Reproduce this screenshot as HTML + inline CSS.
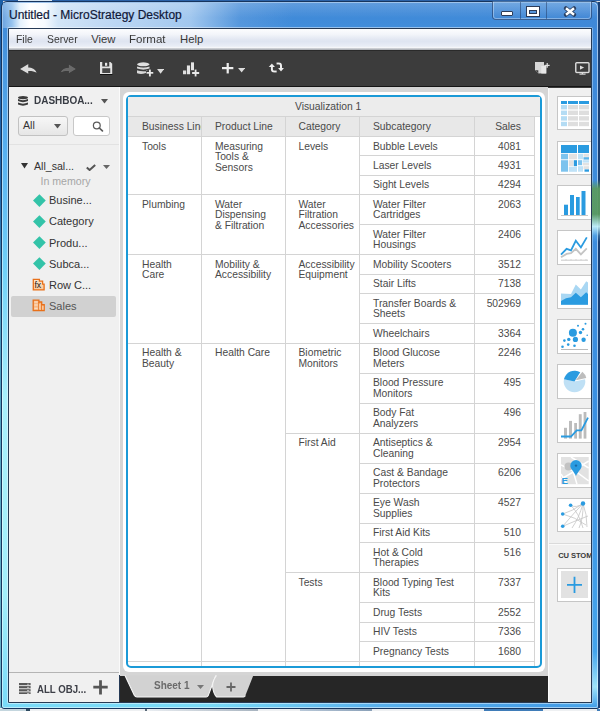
<!DOCTYPE html>
<html><head><meta charset="utf-8">
<style>
*{margin:0;padding:0;box-sizing:border-box}
html,body{width:600px;height:711px;overflow:hidden;background:#8fb8e0;font-family:"Liberation Sans",sans-serif}
.a{position:absolute}
#frame{left:0;top:0;width:600px;height:711px}
.t{position:absolute;white-space:nowrap;color:#4a4a4a;font-size:10.3px;line-height:10.5px}
.hl{position:absolute;height:1px;background:#d4d4d4}
.vl{position:absolute;width:1px;background:#d4d4d4}
.n{text-align:right}
.box{position:absolute;left:557px;width:40px;height:35px;background:#fff;border:1px solid #c9c9c9}
</style></head><body>
<!-- desktop / window frame -->
<div class="a" style="left:0;top:0;width:600px;height:711px;background:#d8dde4"></div>
<div class="a" style="left:0;top:0;width:600px;height:1px;background:#2b62a8"></div><div class="a" style="left:18px;top:0;width:34px;height:1px;background:#d8e6f2"></div>
<div class="a" style="left:0;top:0;width:3px;height:711px;background:linear-gradient(180deg,#1c5fa8 0,#1f66ad 25%,#4a9cc0 45%,#6ab4c8 100%)"></div>
<div class="a" style="left:0;top:708px;width:600px;height:3px;background:#eef0f2"></div>
<div class="a" style="left:0;top:709px;width:26px;height:2px;background:#c4d6de"></div>
<div class="a" style="left:26px;top:709px;width:4px;height:2px;background:#2e4a60"></div>
<div class="a" style="left:145px;top:709px;width:2px;height:2px;background:#5a6a78"></div>
<div class="a" style="left:150px;top:709px;width:108px;height:2px;background:linear-gradient(90deg,#e8ecf0,#a8b4c0)"></div>
<div class="a" style="left:300px;top:709px;width:72px;height:2px;background:linear-gradient(90deg,#b8c8d8,#8aa0b8)"></div>
<div class="a" style="left:484px;top:709px;width:59px;height:2px;background:#3f7cb8"></div>
<div class="a" style="left:597px;top:709px;width:3px;height:2px;background:#3f7cb8"></div>
<!-- window body -->
<div class="a" style="left:1px;top:1px;width:599px;height:708px;border-radius:6px 6px 3px 3px;background:linear-gradient(180deg,#3d86d6 0,#58b0f0 21%,#70d0f8 38%,#a8f0fc 56%,#a2eefa 84%,#78daf8 100%);border:1px solid #17355e"></div>
<div class="a" style="left:3px;top:702px;width:596px;height:6px;background:linear-gradient(90deg,rgba(0,0,0,0) 0,rgba(0,0,0,0) 35%,#5ab2ee 62%,#3f98e6 100%)"></div>
<!-- right side is bluer -->
<div class="a" style="left:560px;top:2px;width:39px;height:706px;border-radius:0 5px 3px 0;background:linear-gradient(180deg,#3f88d8 0,#3a90e2 60%,#44a4ec 92%,#9ee4fa 97%,#3f9ce8 100%)"></div>
<div class="a" style="left:2px;top:2px;width:596px;height:706px;border-radius:5px 5px 2px 2px;border:1px solid rgba(255,255,255,.5)"></div>
<div class="a" style="left:598px;top:2px;width:2px;height:706px;background:#1b3f72"></div>
<!-- title glow -->
<div class="a" style="left:3px;top:3px;width:330px;height:25px;background:linear-gradient(90deg,rgba(110,165,225,1.00) 0.0%,rgba(150,195,238,1.00) 2.7%,rgba(228,241,252,1.00) 5.2%,rgba(255,255,255,1.00) 8.2%,rgba(246,250,254,1.00) 12.7%,rgba(210,229,247,1.00) 16.7%,rgba(192,217,244,1.00) 30.3%,rgba(172,206,241,0.90) 56.7%,rgba(110,165,225,0.45) 71.8%,rgba(80,145,215,0.00) 87.9%)"></div>
<div class="a" style="left:3px;top:3px;width:594px;height:25px;background:linear-gradient(180deg,rgba(255,255,255,.18),rgba(255,255,255,0) 60%)"></div>
<div class="a" style="left:9px;top:8.4px;font-size:12px;color:#101838;white-space:nowrap;line-height:14px;-webkit-text-stroke:.2px #101838">Untitled - MicroStrategy Desktop</div>
<!-- caption buttons -->
<div class="a" style="left:492px;top:1px;width:100px;height:19px;border:1px solid rgba(25,45,85,.55);border-top:none;border-radius:0 0 4px 4px;background:linear-gradient(180deg,rgba(140,185,232,.45),rgba(70,130,205,.25))"></div>
<div class="a" style="left:493px;top:2px;width:98px;height:17px;border:1px solid rgba(255,255,255,.35);border-top:none;border-radius:0 0 3px 3px"></div>
<div class="a" style="left:519.5px;top:2px;width:1px;height:17px;background:rgba(25,45,85,.45)"></div>
<div class="a" style="left:546px;top:2px;width:1px;height:17px;background:rgba(25,45,85,.45)"></div>
<div class="a" style="left:501px;top:11px;width:12px;height:4.5px;background:#fff;border:1px solid #2d3c58;border-radius:1px"></div>
<div class="a" style="left:527px;top:6.5px;width:12px;height:9px;border:2.5px solid #fff;border-top-width:3px;box-shadow:0 0 0 1px #2d3c58, inset 0 0 0 1px #2d3c58"></div>
<svg class="a" style="left:562.5px;top:6px" width="14" height="11" viewBox="0 0 14 11"><path d="M3 2.3 L11 8.7 M11 2.3 L3 8.7" stroke="rgba(35,50,80,.85)" stroke-width="4.2" stroke-linecap="round"/><path d="M3 2.3 L11 8.7 M11 2.3 L3 8.7" stroke="#fff" stroke-width="2.5" stroke-linecap="butt"/></svg>

<!-- client area edge -->
<div class="a" style="left:8px;top:28px;width:584px;height:675px;background:#263a55;border-radius:1px"></div>
<div class="a" style="left:7px;top:27px;width:586px;height:677px;border:1px solid rgba(255,255,255,.45);border-right-color:transparent;border-radius:2px"></div>
<div class="a" style="left:591px;top:28px;width:1px;height:675px;background:#263a55"></div>
<div class="a" style="left:592px;top:28px;width:1px;height:675px;background:rgba(170,205,240,.6)"></div>
<div class="a" style="left:592px;top:180px;width:8px;height:62px;background:linear-gradient(180deg,rgba(90,154,96,0) 0,rgba(90,154,96,.95) 14%,rgba(90,154,96,.95) 55%,rgba(200,245,250,.9) 75%,rgba(120,200,240,.3) 90%,rgba(60,150,230,0) 100%)"></div>
<!-- menu bar -->
<div class="a" style="left:9px;top:29px;width:582px;height:21px;background:linear-gradient(180deg,#fcfdfe 0,#f3f5fa 25%,#e2e7f2 50%,#dfe5f1 60%,#e9edf6 82%,#f6f7fa 88%,#b9bcc2 95%,#a8abb0 100%)"></div>
<div class="a" style="left:15.8px;top:32.8px;font-size:11.3px;color:#383838;line-height:13px;white-space:nowrap;transform:scaleX(.92);transform-origin:0 0">File</div>
<div class="a" style="left:46.7px;top:32.8px;font-size:11.3px;color:#383838;line-height:13px;white-space:nowrap;transform:scaleX(.92);transform-origin:0 0">Server</div>
<div class="a" style="left:91.2px;top:32.8px;font-size:11.3px;color:#383838;line-height:13px;white-space:nowrap;transform:scaleX(1);transform-origin:0 0">View</div>
<div class="a" style="left:129px;top:32.8px;font-size:11.3px;color:#383838;line-height:13px;white-space:nowrap;transform:scaleX(1.02);transform-origin:0 0">Format</div>
<div class="a" style="left:180px;top:32.8px;font-size:11.3px;color:#383838;line-height:13px;white-space:nowrap;transform:scaleX(1);transform-origin:0 0">Help</div>

<!-- toolbar -->
<div class="a" style="left:9px;top:49.5px;width:582px;height:38px;background:#3c3c3c;border-top:1px solid #2a2a2a"></div>
<div class="a" style="left:9px;top:86px;width:582px;height:1px;background:#151515"></div>
<div id="tbicons" class="a" style="left:0;top:0;width:600px;height:90px;filter:drop-shadow(0 .8px .4px rgba(0,0,0,.75))">
<!-- undo -->
<svg class="a" style="left:19.5px;top:62.5px" width="18" height="12" viewBox="0 0 18 12"><path d="M0 5.9 L8.3 0.9 V4.5 C12 4.5 15.2 6 16.7 9.7 C14 8.2 11.5 7.8 8.3 7.9 V10.8 Z" fill="#dcdcdc"/></svg>
<!-- redo -->
<svg class="a" style="left:58.5px;top:62.5px" width="18" height="12" viewBox="0 0 18 12"><path d="M17.2 6 L9.7 1.2 V4.7 C6 4.7 3 6 1.4 9.6 C4 8.2 6.5 7.8 9.7 7.9 V10.6 Z" fill="#6a6a6a"/></svg>
<!-- save -->
<svg class="a" style="left:99.75px;top:61.75px" width="13" height="13" viewBox="0 0 13 13"><path d="M0 0 H10.5 L12.25 1.75 V12 H0 Z" fill="#e2e2e2"/><rect x="2.25" y="0" width="7" height="4.5" fill="#3c3c3c"/><rect x="5" y="0.8" width="2.2" height="3" fill="#e8e8e8"/><rect x="2.25" y="6.25" width="8" height="4.75" fill="#474747"/><rect x="0" y="12" width="12.25" height="1" fill="#111"/></svg>
<!-- db+ -->
<svg class="a" style="left:136.5px;top:61.5px" width="17" height="15" viewBox="0 0 17 15"><ellipse cx="6.3" cy="2.3" rx="6.3" ry="2" fill="#e0e0e0"/><path d="M0 4.6 Q6.3 6.6 12.6 4.6 V6.6 Q6.3 8.8 0 6.6Z" fill="#d8d8d8"/><path d="M0 8.3 Q6.3 10.3 12.6 8.3 V8.6 H9 V11 Q4 12.8 0 11.2Z" fill="#d8d8d8"/><path d="M9.5 10.9 H16.3 M12.9 7.4 V14.5" stroke="#e8e8e8" stroke-width="1.9"/></svg>
<svg class="a" style="left:156.9px;top:69.1px" width="7.2" height="4.8" viewBox="0 0 7.2 4.8"><path d="M0 0H7.2L3.6 4.8Z" fill="#dcdcdc"/></svg>
<!-- bar+ -->
<svg class="a" style="left:183px;top:61.5px" width="17" height="15" viewBox="0 0 17 15"><rect x="0" y="8.4" width="3.2" height="3.9" fill="#dedede"/><rect x="3.9" y="3.4" width="3.2" height="8.9" fill="#e4e4e4"/><rect x="8" y="0.3" width="3" height="8" fill="#e4e4e4"/><path d="M9.1 11 H16.2 M12.6 7.5 V14.5" stroke="#e8e8e8" stroke-width="1.9"/></svg>
<!-- plus -->
<svg class="a" style="left:222.3px;top:63px" width="12" height="11" viewBox="0 0 12 11"><path d="M0 5.2 H11.4 M5.7 0 V10.4" stroke="#eeeeee" stroke-width="2.3"/></svg>
<svg class="a" style="left:237.7px;top:68px" width="7.3" height="4.5" viewBox="0 0 7.3 4.5"><path d="M0 0H7.3L3.65 4.5Z" fill="#dcdcdc"/></svg>
<!-- refresh -->
<svg class="a" style="left:268px;top:62px" width="17" height="11" viewBox="0 0 17 11"><path d="M0.7 5 L3.9 1.4 L7 5Z" fill="#eee"/><path d="M3.9 4.5 V7.3 Q3.9 9.6 6.2 9.6 H8.7" fill="none" stroke="#eee" stroke-width="2"/><path d="M8.5 1.5 H10.9 Q13 1.5 13 3.7 V6.4" fill="none" stroke="#eee" stroke-width="2"/><path d="M10 6.1 L16 6.1 L13 9.4Z" fill="#eee"/></svg>
<!-- page+ -->
<svg class="a" style="left:534.5px;top:62px" width="16" height="12.5" viewBox="0 0 16 12.5"><path d="M0 0 H9 V3.2 H11.3 V11.5 H3.5 L0 8 Z" fill="#d6d6d6"/><path d="M0.5 8.2 L3.3 8.2 L3.3 11.2Z" fill="#3c3c3c"/><rect x="6.3" y="4" width="5" height="7.5" fill="#e8e8e8"/><path d="M9.7 3.4 H14.7 M12.2 1 V5.8" stroke="#e0e0e0" stroke-width="1.3"/></svg>
<!-- present -->
<svg class="a" style="left:574.5px;top:61.8px" width="15" height="13" viewBox="0 0 15 13"><rect x="0.8" y="0.8" width="13.2" height="9.6" rx="0.8" fill="none" stroke="#dcdcdc" stroke-width="1.5"/><path d="M5 3.4 L9.2 5.6 L5 7.8Z" fill="#dcdcdc"/><path d="M7.4 10.4 V12 M4.4 12.1 H10.6" stroke="#dcdcdc" stroke-width="1.4"/></svg>
</div>

<!-- left panel -->
<div class="a" style="left:9px;top:87px;width:110px;height:615px;background:#f0f0f0"></div>
<div class="a" style="left:119px;top:87px;width:1px;height:588px;background:#fafafa"></div>
<!-- canvas -->
<div class="a" style="left:120px;top:87px;width:428px;height:589px;background:#d5d5d5"></div>
<!-- right panel -->
<div class="a" style="left:548px;top:88px;width:1px;height:614px;background:#fbfbfb"></div>
<div class="a" style="left:549px;top:88px;width:42px;height:614px;background:#f0f0f0"></div>


<!-- left panel content -->
<svg class="a" style="left:18px;top:95.5px" width="10" height="10.5" viewBox="0 0 10 10.5">
<ellipse cx="5" cy="1.6" rx="5" ry="1.6" fill="#3c3c3c"/>
<path d="M0 3.1 Q5 5.2 10 3.1 V5.1 Q5 7.2 0 5.1Z" fill="#3c3c3c"/>
<path d="M0 6.6 Q5 8.7 10 6.6 V8.6 Q5 10.9 0 8.6Z" fill="#3c3c3c"/>
</svg>
<div class="a" style="left:34.3px;top:94.6px;font-size:10.6px;font-weight:bold;color:#383c44;line-height:11px;white-space:nowrap;transform:scaleX(.94);transform-origin:0 0">DASHBOA...</div>
<svg class="a" style="left:101px;top:99px" width="7" height="4.5" viewBox="0 0 7 4.5"><path d="M0 0H7L3.5 4.5Z" fill="#555"/></svg>
<div class="a" style="left:17.5px;top:115.5px;width:50px;height:20px;border:1px solid #c2c2c2;border-radius:3px;background:linear-gradient(180deg,#f7f7f7,#e6e6e6)"></div>
<div class="a" style="left:23px;top:119.8px;font-size:10.6px;color:#333;line-height:11px;white-space:nowrap">All</div>
<svg class="a" style="left:53.5px;top:124px" width="7" height="4.5" viewBox="0 0 7 4.5"><path d="M0 0H7L3.5 4.5Z" fill="#555"/></svg>
<div class="a" style="left:73px;top:115.5px;width:36.5px;height:20px;border:1px solid #c8c8c8;border-radius:3px;background:#fff"></div>
<svg class="a" style="left:91.5px;top:120.5px" width="12" height="11" viewBox="0 0 12 11"><circle cx="4.8" cy="4.4" r="3.4" fill="none" stroke="#5a5a5a" stroke-width="1.25"/><path d="M7.3 7 L10.4 9.9" stroke="#5a5a5a" stroke-width="1.7" stroke-linecap="round"/></svg>
<div class="a" style="left:9px;top:143.5px;width:110px;height:1px;background:#e2e2e2"></div>
<svg class="a" style="left:21px;top:163.3px" width="7" height="5.5" viewBox="0 0 7 5.5"><path d="M0 0H7L3.5 5.5Z" fill="#333"/></svg>
<div class="a" style="left:34px;top:161px;font-size:10.6px;color:#333;line-height:11px;white-space:nowrap">All_sal...</div>
<svg class="a" style="left:86px;top:163.5px" width="10" height="7" viewBox="0 0 10 7"><path d="M0.8 3.4 L3.6 6 L9.2 0.9" fill="none" stroke="#555" stroke-width="2"/></svg>
<svg class="a" style="left:102.7px;top:165px" width="7" height="4" viewBox="0 0 7 4"><path d="M0 0H7L3.5 4Z" fill="#666"/></svg>
<div class="a" style="left:40.5px;top:176.3px;font-size:10.6px;color:#a6a6a6;line-height:11px;white-space:nowrap">In memory</div>
<div class="a" style="left:11px;top:296px;width:105px;height:21px;background:#d1d1d1;border-radius:2px"></div>
<div class="a" style="left:34.70px;top:195.60px;width:8.8px;height:8.8px;background:#33c3a8;transform:rotate(45deg)"></div>
<div class="a" style="left:49px;top:195.00px;font-size:11px;color:#333;line-height:11px;white-space:nowrap">Busine...</div>
<div class="a" style="left:34.70px;top:216.80px;width:8.8px;height:8.8px;background:#33c3a8;transform:rotate(45deg)"></div>
<div class="a" style="left:49px;top:216.25px;font-size:11px;color:#333;line-height:11px;white-space:nowrap">Category</div>
<div class="a" style="left:34.70px;top:238.00px;width:8.8px;height:8.8px;background:#33c3a8;transform:rotate(45deg)"></div>
<div class="a" style="left:49px;top:237.50px;font-size:11px;color:#333;line-height:11px;white-space:nowrap">Produ...</div>
<div class="a" style="left:34.70px;top:259.20px;width:8.8px;height:8.8px;background:#33c3a8;transform:rotate(45deg)"></div>
<div class="a" style="left:49px;top:258.75px;font-size:11px;color:#333;line-height:11px;white-space:nowrap">Subca...</div>
<svg class="a" style="left:32.3px;top:277.5px" width="13" height="13" viewBox="0 0 13 13"><defs><linearGradient id="og" x1="0" y1="0" x2="0" y2="1"><stop offset="0" stop-color="#fde6cc"/><stop offset="1" stop-color="#f9c89a"/></linearGradient></defs><path d="M1.3 1.3 H7.4 V3.2 H10.6 V6.2 H12.1 V11.9 H1.3Z" fill="url(#og)" stroke="#e8701a" stroke-width="1.3"/><text x="2.6" y="10.2" font-family="Liberation Sans" font-size="8.6" fill="#151515" letter-spacing="-.3">fx</text></svg>
<div class="a" style="left:49px;top:280.00px;font-size:11px;color:#333;line-height:11px;white-space:nowrap">Row C...</div>
<svg class="a" style="left:32.3px;top:299.4px" width="13" height="12.5" viewBox="0 0 13 12.5"><path d="M1.2 1.2 H6.9 V3 H9.7 V5.7 H12.2 V11.7 H1.2Z" fill="#f7b984" stroke="#e8701a" stroke-width="1.3"/><path d="M6.8 3 V11.5 M9.7 5.6 V11.5" stroke="#e8701a" stroke-width="1"/><path d="M2.3 3 H5.7 M2.3 6 H5.7 M2.3 9.2 H5.7" stroke="#fde8d4" stroke-width="1.1"/><path d="M7.8 4.8 V10.5 M10.9 7 V10.5" stroke="#fde8d4" stroke-width=".8"/></svg>
<div class="a" style="left:49px;top:301.25px;font-size:11px;color:#555;line-height:11px;white-space:nowrap">Sales</div>

<!-- right panel icons -->
<div class="a" style="left:0;top:0;width:600px;height:711px;clip-path:inset(88px 9px 9px 549px)">
<div class="a" style="left:557.2px;top:95.90px;width:40px;height:34.6px;background:#fff;border:1px solid #c6c6c6"></div>
<div class="a" style="left:557.2px;top:140.50px;width:40px;height:34.6px;background:#fff;border:1px solid #c6c6c6"></div>
<div class="a" style="left:557.2px;top:185.00px;width:40px;height:34.6px;background:#fff;border:1px solid #c6c6c6"></div>
<div class="a" style="left:557.2px;top:230.30px;width:40px;height:34.6px;background:#fff;border:1px solid #c6c6c6"></div>
<div class="a" style="left:557.2px;top:274.60px;width:40px;height:34.6px;background:#fff;border:1px solid #c6c6c6"></div>
<div class="a" style="left:557.2px;top:319.10px;width:40px;height:34.6px;background:#fff;border:1px solid #c6c6c6"></div>
<div class="a" style="left:557.2px;top:364.20px;width:40px;height:34.6px;background:#fff;border:1px solid #c6c6c6"></div>
<div class="a" style="left:557.2px;top:408.20px;width:40px;height:34.6px;background:#fff;border:1px solid #c6c6c6"></div>
<div class="a" style="left:557.2px;top:453.40px;width:40px;height:34.6px;background:#fff;border:1px solid #c6c6c6"></div>
<div class="a" style="left:557.2px;top:497.60px;width:40px;height:34.6px;background:#fff;border:1px solid #c6c6c6"></div>
<svg class="a" style="left:561px;top:101px" width="28" height="26" viewBox="0 0 28 26">
<rect x="0" y="0" width="6" height="3" fill="#2a9be0"/><rect x="7" y="0" width="10" height="3" fill="#2a9be0"/><rect x="18" y="0" width="10" height="3" fill="#2a9be0"/>
<rect x="0" y="4.0" width="6" height="4.4" fill="#b4dcf4"/><rect x="7" y="4.0" width="10" height="4.4" fill="#dedede"/><rect x="18" y="4.0" width="10" height="4.4" fill="#dedede"/>
<rect x="0" y="9.6" width="6" height="4.4" fill="#b4dcf4"/><rect x="7" y="9.6" width="10" height="4.4" fill="#dedede"/><rect x="18" y="9.6" width="10" height="4.4" fill="#dedede"/>
<rect x="0" y="15.2" width="6" height="4.4" fill="#b4dcf4"/><rect x="7" y="15.2" width="10" height="4.4" fill="#dedede"/><rect x="18" y="15.2" width="10" height="4.4" fill="#dedede"/>
<rect x="0" y="20.8" width="6" height="4.4" fill="#b4dcf4"/><rect x="7" y="20.8" width="10" height="4.4" fill="#dedede"/><rect x="18" y="20.8" width="10" height="4.4" fill="#dedede"/>
</svg>
<svg class="a" style="left:561px;top:144.5px" width="28" height="27" viewBox="0 0 28 27">
<rect x="0" y="0" width="16" height="8" fill="#2a9be0"/><rect x="17" y="0" width="11" height="8" fill="#2a9be0"/>
<rect x="0" y="8.8" width="7" height="5.5" fill="#7cc3ee"/><rect x="7.8" y="8.8" width="8.2" height="5.5" fill="#e2e2e2"/>
<rect x="17" y="8.8" width="5" height="5.5" fill="#bfe2f7"/><rect x="22.5" y="8.8" width="5.5" height="3" fill="#e2e2e2"/><rect x="22.5" y="12.2" width="5.5" height="2.4" fill="#5cb4ea"/>
<rect x="0" y="15.2" width="7" height="11.5" fill="#7cc3ee"/><rect x="7.8" y="15.2" width="4.5" height="6" fill="#e2e2e2"/><rect x="12.8" y="15.2" width="3.2" height="6" fill="#2a9be0"/><rect x="7.8" y="21.8" width="8.2" height="5" fill="#bfe2f7"/>
<rect x="17" y="15.2" width="4" height="5" fill="#7cc3ee"/><rect x="21.6" y="15.2" width="6.4" height="2.4" fill="#bfe2f7"/><rect x="21.6" y="18" width="6.4" height="2.4" fill="#e2e2e2"/>
<rect x="17" y="21.2" width="5" height="5.5" fill="#bfe2f7"/><rect x="22.5" y="21.2" width="5.5" height="3" fill="#e2e2e2"/><rect x="23.5" y="24.4" width="4.5" height="2.3" fill="#2a9be0"/>
</svg>
<svg class="a" style="left:561px;top:190px" width="28" height="27" viewBox="0 0 28 27">
<rect x="3" y="14.7" width="4" height="10.3" fill="#2a9be0"/><rect x="9" y="5" width="4" height="20" fill="#2a9be0"/><rect x="15" y="7" width="3.7" height="18" fill="#2a9be0"/><rect x="20.5" y="1" width="4" height="24" fill="#2a9be0"/>
<rect x="0" y="25.2" width="27" height="0.8" fill="#bbb"/></svg>
<svg class="a" style="left:560px;top:235px" width="30" height="27" viewBox="0 0 30 27">
<path d="M1 22.3 L6.6 18.9 L11 18.1 L15.8 13.8 L20.9 19.4 L26.8 13.4" fill="none" stroke="#c4c4c4" stroke-width="1.8"/>
<path d="M1 19.7 L6.6 13.8 L11 15.3 L15.8 5.8 L20.9 12.5 L26.8 2.4" fill="none" stroke="#2a9be0" stroke-width="1.8"/>
<path d="M1 25.2 H28" stroke="#bbb" stroke-width=".8"/><path d="M6 24.2V25.2M11 24.2V25.2M16 24.2V25.2M21 24.2V25.2M26 24.2V25.2" stroke="#bbb" stroke-width=".6"/>
</svg>
<svg class="a" style="left:561px;top:280px" width="28" height="26" viewBox="0 0 28 26">
<path d="M0 13.4 L10 14 L14.8 4.5 L19.9 9.6 L25.2 1.3 L27 2.6 V24.7 H0Z" fill="#a9d7f3"/>
<path d="M0 21 L5 18.2 L10 17.2 L14.8 12.7 L19.9 17.2 L25.2 12.3 L27 14 V24.7 H0Z" fill="#2a9be0"/>
</svg>
<svg class="a" style="left:560px;top:320px" width="30" height="32" viewBox="0 0 30 32">
<circle cx="12.9" cy="12.8" r="4.0" fill="#2a9be0"/><circle cx="15.4" cy="19.4" r="2.6" fill="#2a9be0"/><circle cx="23.6" cy="19.7" r="2.2" fill="#2a9be0"/><circle cx="20.5" cy="12.5" r="1.7" fill="#2a9be0"/><circle cx="23.0" cy="9.2" r="1.3" fill="#2a9be0"/><circle cx="18.0" cy="5.8" r="1.0" fill="#2a9be0"/><circle cx="25.5" cy="3.7" r="1.0" fill="#2a9be0"/><circle cx="27.2" cy="15.3" r="0.8" fill="#2a9be0"/><circle cx="8.8" cy="19.4" r="1.7" fill="#2a9be0"/><circle cx="4.4" cy="20.6" r="1.3" fill="#2a9be0"/><circle cx="8.2" cy="24.6" r="1.3" fill="#2a9be0"/><circle cx="14.5" cy="25.7" r="1.3" fill="#2a9be0"/><circle cx="2.5" cy="26.7" r="1.3" fill="#2a9be0"/><path d="M1 29.5 H28" stroke="#aaa" stroke-width=".8"/></svg>
<svg class="a" style="left:560px;top:370px" width="30" height="26" viewBox="0 0 30 26">
<path d="M14.50 11.50 L25.06 9.25 A10.8 10.8 0 1 1 3.94 9.25 Z" fill="#bfe0f5"/>
<path d="M14.50 11.50 L3.94 9.25 A10.8 10.8 0 0 1 20.22 2.34 Z" fill="#2a9be0"/>
<path d="M15.70 10.30 L22.35 1.79 A10.8 10.8 0 0 1 26.26 8.05 Z" fill="#bdbdbd"/>
</svg>
<svg class="a" style="left:561px;top:410px" width="28" height="30" viewBox="0 0 28 30">
<rect x="3" y="17.8" width="3" height="10.8" fill="#bcbcbc"/><rect x="8" y="10.9" width="3" height="17.7" fill="#bcbcbc"/><rect x="13.2" y="13" width="2.8" height="15.6" fill="#bcbcbc"/><rect x="17.8" y="4.2" width="2.9" height="24.4" fill="#bcbcbc"/><rect x="22.6" y="2" width="2.8" height="26.6" fill="#bcbcbc"/>
<path d="M0 26.5 H10 L15.7 20.4 H20.4 L27 7.7" fill="none" stroke="#2a9be0" stroke-width="1.8"/>
</svg>
<svg class="a" style="left:561px;top:457px" width="28" height="28" viewBox="0 0 28 28">
<rect x="0" y="0" width="27.7" height="27.2" fill="#e2e2e2"/>
<path d="M0 8 L12 14 L27.7 4 M10 0 L27.7 11 M0 22 L14 14 L27.7 24 M12 14 L16 27.2 M0 17 L6 27.2" stroke="#fff" stroke-width="1.5" fill="none"/>
<circle cx="7.5" cy="9.5" r="4" fill="#c2c2c2"/>
<path d="M15 19 C13 14.5 9.3 12 9.3 8.8 A5.7 5.7 0 0 1 20.7 8.8 C20.7 12 17 14.5 15 19Z" fill="#2a9be0"/>
<circle cx="15" cy="8.6" r="1.2" fill="#1a6aa8"/>
<text x="0.4" y="27" font-family="Liberation Sans" font-weight="bold" font-size="9.6" fill="#2a9be0">E</text>
</svg>
<svg class="a" style="left:560px;top:500px" width="30" height="30" viewBox="0 0 30 30">
<g fill="none" stroke="#c2c2c2" stroke-width=".75">
<path d="M23 3.5 Q14 13 2.7 26.3"/><path d="M23 3.5 Q13 11 2.7 14"/><path d="M10.6 5.2 Q16 8.5 23 3.5"/><path d="M23 3.5 Q19 18 12 28"/><path d="M23 3.5 Q23.5 18 19 28"/><path d="M23 3.5 Q27 14 27 27"/><path d="M10.6 5.2 Q19 13 23 28"/><path d="M2.7 14 Q15 17 26 25"/><path d="M2.7 26.3 Q15 21 28 16"/>
</g>
<circle cx="10.6" cy="5.2" r="1.8" fill="#2a9be0"/><circle cx="23" cy="3.5" r="2.2" fill="#2a9be0"/><circle cx="2.7" cy="14" r="1.8" fill="#2a9be0"/><circle cx="2.7" cy="26.3" r="1.8" fill="#2a9be0"/>
</svg>
<div class="a" style="left:549px;top:543px;width:42px;height:1px;background:#dadada"></div>
<div class="a" style="left:549px;top:544px;width:42px;height:1px;background:#fafafa"></div>
<div class="a" style="left:558.2px;top:551px;font-size:7.6px;font-weight:bold;color:#3a3a3a;line-height:9px;white-space:nowrap;letter-spacing:-.1px">CU STOM</div>
<div class="a" style="left:557.2px;top:567.6px;width:40px;height:34px;background:#fff;border:1px solid #c6c6c6"></div>
<div class="a" style="left:561px;top:571.3px;width:27px;height:26.7px;background:#e2e2e2"></div>
<svg class="a" style="left:566px;top:576px" width="17" height="17" viewBox="0 0 17 17"><path d="M1 8.8 H16 M8.5 0.8 V16.9" stroke="#2a9be0" stroke-width="1.8"/></svg>
</div>
<!-- container -->
<div class="a" style="left:123px;top:92px;width:422px;height:580px;background:#fff;border-radius:6px"></div>
<div class="a" style="left:126px;top:95px;width:416px;height:573px;border:2px solid #1b9ad7;border-radius:5px"></div>
<div class="a" style="left:0;top:0;width:600px;height:711px;overflow:hidden;clip-path:polygon(128px 97px,540px 97px,540px 666px,128px 666px)"><div class="a" style="left:128px;top:97px;width:412px;height:19px;background:#ececec"></div>
<div class="a" style="left:128px;top:117px;width:406px;height:19px;background:#e8e8e8"></div>
<div class="hl" style="left:128px;top:116px;width:412px"></div>
<div class="hl" style="left:128px;top:136px;width:406px"></div>
<div class="t" style="left:295px;top:102.3px">Visualization 1</div>
<div class="a" style="left:128.00px;top:117px;width:73.00px;height:19px;overflow:hidden"><div class="t" style="left:14.00px;top:5.00px;">Business Line</div></div>
<div class="a" style="left:201.00px;top:117px;width:83.50px;height:19px;overflow:hidden"><div class="t" style="left:14.00px;top:5.00px;">Product Line</div></div>
<div class="a" style="left:284.50px;top:117px;width:74.50px;height:19px;overflow:hidden"><div class="t" style="left:14.00px;top:5.00px;">Category</div></div>
<div class="a" style="left:359.00px;top:117px;width:114.50px;height:19px;overflow:hidden"><div class="t" style="left:14.00px;top:5.00px;">Subcategory</div></div>
<div class="t n" style="right:79.00px;top:122.00px">Sales</div>
<div class="t" style="left:142.00px;top:141.50px;">Tools</div>
<div class="t" style="left:215.00px;top:141.50px;">Measuring<br>Tools &amp;<br>Sensors</div>
<div class="t" style="left:298.50px;top:141.50px;">Levels</div>
<div class="t" style="left:373.00px;top:141.50px;">Bubble Levels</div>
<div class="t n" style="right:79.00px;top:141.50px">4081</div>
<div class="t" style="left:373.00px;top:160.92px;">Laser Levels</div>
<div class="t n" style="right:79.00px;top:160.92px">4931</div>
<div class="t" style="left:373.00px;top:180.34px;">Sight Levels</div>
<div class="t n" style="right:79.00px;top:180.34px">4294</div>
<div class="t" style="left:142.00px;top:199.76px;">Plumbing</div>
<div class="t" style="left:215.00px;top:199.76px;">Water<br>Dispensing<br>&amp; Filtration</div>
<div class="t" style="left:298.50px;top:199.76px;">Water<br>Filtration<br>Accessories</div>
<div class="t" style="left:373.00px;top:199.76px;">Water Filter<br>Cartridges</div>
<div class="t n" style="right:79.00px;top:199.76px">2063</div>
<div class="t" style="left:373.00px;top:229.80px;">Water Filter<br>Housings</div>
<div class="t n" style="right:79.00px;top:229.80px">2406</div>
<div class="t" style="left:142.00px;top:259.84px;">Health<br>Care</div>
<div class="t" style="left:215.00px;top:259.84px;">Mobility &amp;<br>Accessibility</div>
<div class="t" style="left:298.50px;top:259.84px;">Accessibility<br>Equipment</div>
<div class="t" style="left:373.00px;top:259.84px;">Mobility Scooters</div>
<div class="t n" style="right:79.00px;top:259.84px">3512</div>
<div class="t" style="left:373.00px;top:279.26px;">Stair Lifts</div>
<div class="t n" style="right:79.00px;top:279.26px">7138</div>
<div class="t" style="left:373.00px;top:298.68px;">Transfer Boards &amp;<br>Sheets</div>
<div class="t n" style="right:79.00px;top:298.68px">502969</div>
<div class="t" style="left:373.00px;top:328.72px;">Wheelchairs</div>
<div class="t n" style="right:79.00px;top:328.72px">3364</div>
<div class="t" style="left:142.00px;top:348.14px;">Health &amp;<br>Beauty</div>
<div class="t" style="left:215.00px;top:348.14px;">Health Care</div>
<div class="t" style="left:298.50px;top:348.14px;">Biometric<br>Monitors</div>
<div class="t" style="left:373.00px;top:348.14px;">Blood Glucose<br>Meters</div>
<div class="t n" style="right:79.00px;top:348.14px">2246</div>
<div class="t" style="left:373.00px;top:378.18px;">Blood Pressure<br>Monitors</div>
<div class="t n" style="right:79.00px;top:378.18px">495</div>
<div class="t" style="left:373.00px;top:408.22px;">Body Fat<br>Analyzers</div>
<div class="t n" style="right:79.00px;top:408.22px">496</div>
<div class="t" style="left:298.50px;top:438.26px;">First Aid</div>
<div class="t" style="left:373.00px;top:438.26px;">Antiseptics &amp;<br>Cleaning</div>
<div class="t n" style="right:79.00px;top:438.26px">2954</div>
<div class="t" style="left:373.00px;top:468.30px;">Cast &amp; Bandage<br>Protectors</div>
<div class="t n" style="right:79.00px;top:468.30px">6206</div>
<div class="t" style="left:373.00px;top:498.34px;">Eye Wash<br>Supplies</div>
<div class="t n" style="right:79.00px;top:498.34px">4527</div>
<div class="t" style="left:373.00px;top:528.38px;">First Aid Kits</div>
<div class="t n" style="right:79.00px;top:528.38px">510</div>
<div class="t" style="left:373.00px;top:547.80px;">Hot &amp; Cold<br>Therapies</div>
<div class="t n" style="right:79.00px;top:547.80px">516</div>
<div class="t" style="left:298.50px;top:577.84px;">Tests</div>
<div class="t" style="left:373.00px;top:577.84px;">Blood Typing Test<br>Kits</div>
<div class="t n" style="right:79.00px;top:577.84px">7337</div>
<div class="t" style="left:373.00px;top:607.88px;">Drug Tests</div>
<div class="t n" style="right:79.00px;top:607.88px">2552</div>
<div class="t" style="left:373.00px;top:627.30px;">HIV Tests</div>
<div class="t n" style="right:79.00px;top:627.30px">7336</div>
<div class="t" style="left:373.00px;top:646.72px;">Pregnancy Tests</div>
<div class="t n" style="right:79.00px;top:646.72px">1680</div>
<div class="hl" style="left:359.00px;top:155.42px;width:175.00px"></div>
<div class="hl" style="left:359.00px;top:174.84px;width:175.00px"></div>
<div class="hl" style="left:359.00px;top:194.26px;width:175.00px"></div>
<div class="hl" style="left:284.50px;top:194.26px;width:74.50px"></div>
<div class="hl" style="left:128.00px;top:194.26px;width:156.50px"></div>
<div class="hl" style="left:359.00px;top:224.30px;width:175.00px"></div>
<div class="hl" style="left:359.00px;top:254.34px;width:175.00px"></div>
<div class="hl" style="left:284.50px;top:254.34px;width:74.50px"></div>
<div class="hl" style="left:128.00px;top:254.34px;width:156.50px"></div>
<div class="hl" style="left:359.00px;top:273.76px;width:175.00px"></div>
<div class="hl" style="left:359.00px;top:293.18px;width:175.00px"></div>
<div class="hl" style="left:359.00px;top:323.22px;width:175.00px"></div>
<div class="hl" style="left:359.00px;top:342.64px;width:175.00px"></div>
<div class="hl" style="left:284.50px;top:342.64px;width:74.50px"></div>
<div class="hl" style="left:128.00px;top:342.64px;width:156.50px"></div>
<div class="hl" style="left:359.00px;top:372.68px;width:175.00px"></div>
<div class="hl" style="left:359.00px;top:402.72px;width:175.00px"></div>
<div class="hl" style="left:359.00px;top:432.76px;width:175.00px"></div>
<div class="hl" style="left:284.50px;top:432.76px;width:74.50px"></div>
<div class="hl" style="left:359.00px;top:462.80px;width:175.00px"></div>
<div class="hl" style="left:359.00px;top:492.84px;width:175.00px"></div>
<div class="hl" style="left:359.00px;top:522.88px;width:175.00px"></div>
<div class="hl" style="left:359.00px;top:542.30px;width:175.00px"></div>
<div class="hl" style="left:359.00px;top:572.34px;width:175.00px"></div>
<div class="hl" style="left:284.50px;top:572.34px;width:74.50px"></div>
<div class="hl" style="left:359.00px;top:602.38px;width:175.00px"></div>
<div class="hl" style="left:359.00px;top:621.80px;width:175.00px"></div>
<div class="hl" style="left:359.00px;top:641.22px;width:175.00px"></div>
<div class="hl" style="left:359.00px;top:660.64px;width:175.00px"></div>
<div class="hl" style="left:284.50px;top:660.64px;width:74.50px"></div>
<div class="hl" style="left:128.00px;top:660.64px;width:156.50px"></div>
<div class="vl" style="left:201.00px;top:117px;height:550px"></div>
<div class="vl" style="left:284.50px;top:117px;height:550px"></div>
<div class="vl" style="left:359.00px;top:117px;height:550px"></div>
<div class="vl" style="left:473.50px;top:117px;height:550px"></div>
<div class="vl" style="left:534.00px;top:117px;height:550px"></div></div>


<!-- tab bar -->
<div class="a" style="left:119.5px;top:675.5px;width:428.5px;height:26px;background:#262626"></div>
<svg class="a" style="left:119px;top:675px" width="140" height="24" viewBox="0 0 140 24">
<path d="M6 0.5 L15.3 20.3 Q16.2 22 18 22 H87.2 Q88.6 22 89.2 20.6 L96.8 0.5Z" fill="#d2d2d2"/>
<path d="M6 0.5 L15.3 20.3 Q16.2 22 18 22 H87.2 Q88.6 22 89.2 20.6 L96.8 0.5" fill="none" stroke="#f6f6f6" stroke-width="1.1"/>
<path d="M97.5 0.5 Q93.2 6.5 93.6 11.5 Q94.5 19.5 97.8 22 H124.5 Q125.8 22 126.4 20.6 L134.3 0.5Z" fill="#d2d2d2"/>
<path d="M97.5 0.5 Q93.2 6.5 93.6 11.5 Q94.5 19.5 97.8 22 H124.5 Q125.8 22 126.4 20.6" fill="none" stroke="#f6f6f6" stroke-width="1.1"/>
</svg>
<div class="a" style="left:153.5px;top:679.6px;font-size:10.2px;font-weight:bold;color:#6a6a6a;line-height:12px;white-space:nowrap;transform:scaleX(.98);transform-origin:0 0">Sheet 1</div>
<svg class="a" style="left:196.8px;top:684.8px" width="7" height="4" viewBox="0 0 7 4"><path d="M0 0H7L3.5 4Z" fill="#777"/></svg>
<svg class="a" style="left:226px;top:682px" width="10" height="10" viewBox="0 0 10 10"><path d="M0.5 5 H9.5 M5 0.5 V9.5" stroke="#666" stroke-width="1.8"/></svg>


<!-- bottom left -->
<div class="a" style="left:9px;top:672px;width:110px;height:1px;background:#b4b4b4"></div>
<svg class="a" style="left:18.7px;top:682.7px" width="12" height="11.5" viewBox="0 0 12 11.5"><g fill="#585858"><rect x="0" y="0" width="11.6" height="2.2"/><rect x="0" y="3.1" width="11.6" height="2.2"/><rect x="0" y="6.2" width="11.6" height="2.2"/><rect x="0" y="9.3" width="11.6" height="2.2"/></g><g fill="#ddd"><rect x="8" y="0.8" width="2.2" height=".7"/><rect x="8" y="3.9" width="2.2" height=".7"/><rect x="8" y="7" width="2.2" height=".7"/><rect x="8" y="10.1" width="2.2" height=".7"/></g></svg>
<div class="a" style="left:37px;top:682.6px;font-size:10.6px;font-weight:bold;color:#3e4048;line-height:12px;white-space:nowrap;transform:scaleX(.91);transform-origin:0 0">ALL OBJ...</div>
<svg class="a" style="left:93px;top:680px" width="15" height="15" viewBox="0 0 15 15"><path d="M0.3 7.2 H14.7 M7.5 0.2 V14.4" stroke="#555" stroke-width="2.8"/></svg>
</body></html>
